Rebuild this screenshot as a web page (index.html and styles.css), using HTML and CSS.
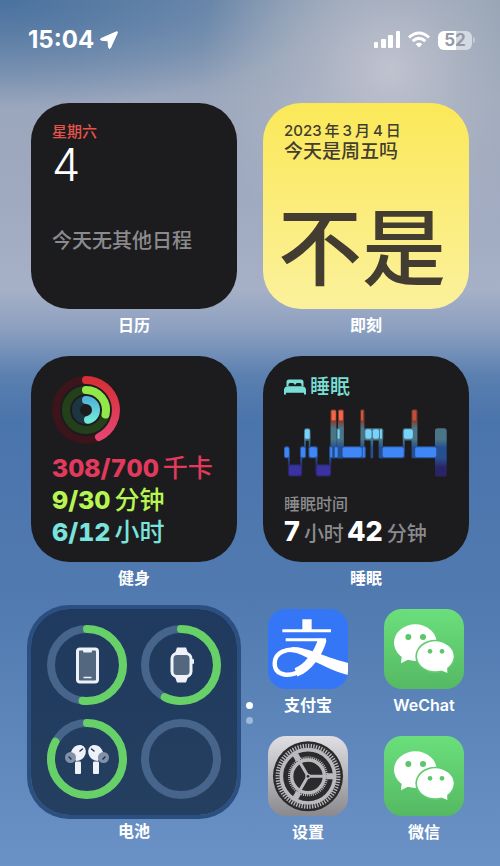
FILE: index.html
```
<!DOCTYPE html>
<html lang="zh-CN">
<head>
    <meta charset="UTF-8">
    <meta name="viewport" content="width=device-width, initial-scale=1.0">
    <title>主屏幕</title>
    <link rel="stylesheet" href="styles.css">
</head>
<body>
    <!-- 公用图形 -->
    <svg class="defs" width="0" height="0" aria-hidden="true">
        <defs>
            <linearGradient id="green" x1="0" y1="0" x2="0" y2="1">
                <stop offset="0" stop-color="#6bdf7c"/>
                <stop offset="1" stop-color="#55b963"/>
            </linearGradient>
            <symbol id="wechat" viewBox="0 0 240 240">
                <rect width="240" height="240" fill="url(#green)"/>
                <path d="M54 134L51 163L80 148Z" fill="#fff"/>
                <ellipse cx="94" cy="101" rx="64" ry="55" fill="#fff"/>
                <ellipse cx="154" cy="142" rx="60" ry="50" fill="#60cc70"/>
                <ellipse cx="154" cy="142" rx="55" ry="45" fill="#fff"/>
                <path d="M168 182L190 192L189 166Z" fill="#fff"/>
                <g fill="#5cc66c">
                    <circle cx="73" cy="84" r="9"/>
                    <circle cx="117" cy="84" r="9"/>
                    <circle cx="138" cy="127" r="7"/>
                    <circle cx="174" cy="127" r="7"/>
                </g>
            </symbol>
        </defs>
    </svg>

    <header class="status">
        <time>15:04</time>
        <svg class="arrow" viewBox="0 0 18 18" width="18" height="18"><path d="M16.500 .8L1 7.600Q-.3 9 1.500 9.300L8 9.800L8.600 16.300Q9 18.300 10.400 17L17.400 1.600Q17.600 .4 16.500 .8Z" fill="#fff" stroke="#fff"/></svg>
        <div class="signals">
            <svg viewBox="0 0 26 18" width="26" height="18" fill="#fff">
                <rect y="11" width="4" height="6" rx="1"/>
                <rect x="7" y="8" width="5" height="9" rx="1"/>
                <rect x="14" y="4" width="5" height="13" rx="1"/>
                <rect x="22" width="4" height="17" rx="1"/>
            </svg>
            <svg viewBox="0 0 22 18" width="22" height="18" fill="none" stroke="#fff" stroke-width="3">
                <path d="M1 6.500Q11-2.500 21 6.500"/>
                <path d="M4.600 10.200Q11 4.500 17.400 10.200"/>
                <path d="M11 16.500L7.700 13.200Q11 10.400 14.300 13.200Z" fill="#fff" stroke="none"/>
            </svg>
            <div class="battery"><span>52</span></div>
        </div>
    </header>

    <main class="home">
        <section class="cell">
            <div class="widget calendar">
                <p class="week">星期六</p>
                <p class="day">4</p>
                <p class="none">今天无其他日程</p>
            </div>
            <h2>日历</h2>
        </section>

        <section class="cell">
            <div class="widget jike">
                <p class="date">2023<i>年</i>3<i>月</i>4<i>日</i></p>
                <p class="ask">今天是周五吗</p>
                <p class="answer">不是</p>
            </div>
            <h2>即刻</h2>
        </section>

        <section class="cell">
            <div class="widget fitness">
                <svg class="rings" viewBox="0 0 70 70" width="70" height="70" fill="none" stroke-width="8" stroke-linecap="round">
                    <defs>
                        <linearGradient id="move" x1="0" y1="0" x2="0" y2="1">
                            <stop offset="0" stop-color="#d62f35"/>
                            <stop offset="1" stop-color="#e54570"/>
                        </linearGradient>
                        <linearGradient id="stand" x1="0" y1="0" x2="0" y2="1">
                            <stop offset="0" stop-color="#55b5d8"/>
                            <stop offset="1" stop-color="#72e6d8"/>
                        </linearGradient>
                    </defs>
                    <circle cx="35" cy="35" r="30" stroke="#3b151b"/>
                    <circle cx="35" cy="35" r="20" stroke="#24401a"/>
                    <circle cx="35" cy="35" r="10" stroke="#1d3441"/>
                    <path d="M35 5A30 30 0 0 1 48 62" stroke="url(#move)"/>
                    <path d="M35 15A20 20 0 0 1 54.500 39.500" stroke="#92e84b"/>
                    <path d="M35 25A10 10 0 0 1 37 44.800" stroke="url(#stand)"/>
                </svg>
                <p class="red"><b>308/700</b>千卡</p>
                <p class="lime"><b>9/30</b>分钟</p>
                <p class="cyan"><b>6/12</b>小时</p>
            </div>
            <h2>健身</h2>
        </section>

        <section class="cell">
            <div class="widget sleep">
                <p class="title">
                    <svg viewBox="0 0 22 16" width="22" height="16" fill="#79dfd5">
                        <path d="M2.500 7V3Q2.500 .5 5 .5H17Q19.500 .5 19.500 3V7H17.500V5.500Q17.500 4 16 4H13Q11.800 4 11.800 5.500H10.200Q10.200 4 9 4H6Q4.500 4 4.500 5.500V7Z"/>
                        <path d="M0 15.500V10.500Q.5 7.500 3.500 7.200H18.500Q21.500 7.500 22 10.500V15.500H20V13.800H2V15.500Z"/>
                    </svg>
                    睡眠
                </p>
                <svg class="chart" viewBox="84 174 504 210">
                    <defs>
                        <linearGradient id="stage" gradientUnits="userSpaceOnUse" x1="0" y1="176" x2="0" y2="381">
                            <stop offset="0" stop-color="#883b2c"/>
                            <stop offset=".17" stop-color="#883b2c"/>
                            <stop offset=".28" stop-color="#497586"/>
                            <stop offset=".45" stop-color="#497586"/>
                            <stop offset=".57" stop-color="#264f91"/>
                            <stop offset=".73" stop-color="#264f91"/>
                            <stop offset=".87" stop-color="#2a2365"/>
                            <stop offset="1" stop-color="#2a2365"/>
                        </linearGradient>
                    </defs>
                    <!-- 阶段之间的连线 -->
                    <g fill="url(#stage)">
                        <rect x="84" y="289" width="17" height="37" rx="6"/>
                        <rect x="96" y="300" width="6" height="74"/>
                        <rect x="96" y="345" width="44" height="37" rx="7"/>
                        <rect x="134" y="300" width="6" height="70"/>
                        <rect x="133" y="289" width="19" height="37" rx="6"/>
                        <rect x="146" y="234" width="19" height="38" rx="6"/>
                        <rect x="146" y="250" width="5" height="60"/>
                        <rect x="160" y="250" width="5" height="60"/>
                        <rect x="159" y="289" width="29" height="37" rx="6"/>
                        <rect x="181" y="300" width="6" height="70"/>
                        <rect x="181" y="345" width="48" height="37" rx="7"/>
                        <rect x="223" y="289" width="6" height="82"/>
                        <rect x="227" y="176" width="18" height="150" rx="5"/>
                        <rect x="250" y="176" width="18" height="150" rx="5"/>
                        <rect x="245" y="234" width="12" height="92" rx="4"/>
                        <rect x="223" y="289" width="113" height="37" rx="6"/>
                        <rect x="319" y="176" width="12" height="150" rx="4"/>
                        <rect x="330" y="234" width="59" height="37" rx="6"/>
                        <rect x="350" y="250" width="8" height="76" rx="2"/>
                        <rect x="375" y="250" width="13" height="76" rx="4"/>
                        <rect x="376" y="289" width="79" height="37" rx="6"/>
                        <rect x="449" y="245" width="6" height="60"/>
                        <rect x="449" y="234" width="40" height="37" rx="6"/>
                        <rect x="476" y="176" width="18" height="150" rx="5"/>
                        <rect x="479" y="289" width="80" height="37" rx="6"/>
                        <rect x="548" y="234" width="36" height="148" rx="8"/>
                    </g>
                    <g fill="#f0664a">
                        <rect x="230" y="179" width="13" height="31" rx="3"/>
                        <rect x="253" y="179" width="12" height="31" rx="3"/>
                        <rect x="321" y="179" width="6" height="31" rx="2" opacity=".7"/>
                        <rect x="479" y="179" width="11" height="31" rx="2" opacity=".5"/>
                    </g>
                    <g fill="#79d2fa">
                        <rect x="148" y="237" width="15" height="29" rx="5"/>
                        <rect x="249" y="237" width="6" height="29" rx="2"/>
                        <rect x="334" y="237" width="19" height="29" rx="6"/>
                        <rect x="357" y="237" width="19" height="29" rx="6"/>
                        <rect x="379" y="237" width="6" height="29" rx="2"/>
                        <rect x="452" y="237" width="28" height="29" rx="6"/>
                    </g>
                    <g fill="#3f86f6">
                        <rect x="86" y="292" width="13" height="31" rx="5"/>
                        <rect x="136" y="292" width="13" height="31" rx="5"/>
                        <rect x="162" y="292" width="23" height="31" rx="6"/>
                        <rect x="226" y="292" width="6" height="31" rx="2"/>
                        <rect x="240" y="292" width="9" height="31" rx="2"/>
                        <rect x="264" y="292" width="59" height="31" rx="6"/>
                        <rect x="326" y="292" width="6" height="31" rx="2"/>
                        <rect x="387" y="292" width="65" height="31" rx="6"/>
                        <rect x="487" y="292" width="65" height="31" rx="6"/>
                    </g>
                    <g fill="#3b32a2">
                        <rect x="99" y="348" width="38" height="31" rx="6"/>
                        <rect x="184" y="348" width="42" height="31" rx="6"/>
                    </g>
                </svg>
                <p class="caption">睡眠时间</p>
                <p class="total"><b>7</b>小时<b>42</b>分钟</p>
            </div>
            <h2>睡眠</h2>
        </section>

        <section class="cell">
            <div class="widget power">
                <svg viewBox="0 0 80 80">
                    <circle class="track" cx="40" cy="40" r="36"/>
                    <circle class="level" cx="40" cy="40" r="36" pathLength="100" stroke-dasharray="52 100"/>
                    <rect x="30.500" y="24" width="20" height="33" rx="2.500" fill="#53677f" stroke="#eef1f8" stroke-width="3"/>
                    <path d="M35.500 24H45.500L44.500 27.500H36.500Z" fill="#eef1f8"/>
                    <path d="M36.500 52.500H44.500" stroke="#eef1f8" stroke-width="1.500"/>
                </svg>
                <svg viewBox="0 0 80 80">
                    <circle class="track" cx="40" cy="40" r="36"/>
                    <circle class="level" cx="40" cy="40" r="36" pathLength="100" stroke-dasharray="57.500 100"/>
                    <path d="M34 28L36 22.500H45L47 28M34 52L36 57.500H45L47 52" fill="#eef1f8"/>
                    <rect x="31" y="28.500" width="19" height="23" rx="5" fill="#53677f" stroke="#eef1f8" stroke-width="3"/>
                    <rect x="51" y="34" width="2" height="5" rx="1" fill="#eef1f8"/>
                </svg>
                <svg viewBox="0 0 80 80">
                    <circle class="track" cx="40" cy="40" r="36"/>
                    <circle class="level" cx="40" cy="40" r="36" pathLength="100" stroke-dasharray="83 100"/>
                    <g id="bud">
                        <path d="M24 33Q27 25 34 26Q40 28 38.500 35Q36 42 29 42Z" fill="#eef1f8"/>
                        <rect x="28" y="42.500" width="6" height="12.500" rx="1" fill="#eef1f8"/>
                        <circle cx="23.500" cy="38.500" r="5.500" fill="#8291a7"/>
                        <path d="M33 32L35.500 30M22 38L24 40" stroke="#20344f" stroke-width="1.500" stroke-linecap="round"/>
                    </g>
                    <use href="#bud" transform="matrix(-1 0 0 1 80 0)"/>
                </svg>
                <svg viewBox="0 0 80 80">
                    <circle class="track" cx="40" cy="40" r="36"/>
                </svg>
            </div>
            <h2>电池</h2>
            <div class="dots"><i class="on"></i><i></i></div>
        </section>

        <nav class="apps">
            <a href="#">
                <svg viewBox="0 0 240 240">
                    <rect width="240" height="240" fill="#3576f6"/>
                    <g fill="none" stroke="#fff">
                        <path d="M117 31V64" stroke-width="28"/>
                        <path d="M43 65H189M53 92H174" stroke-width="9"/>
                        <path d="M163 92C153 130 120 178 84 190" stroke-width="26"/>
                        <path d="M104 182C70 205 20 204 20 163C20 130 56 117 92 123" stroke-width="13"/>
                    </g>
                    <path d="M72 115C115 113 154 139 240 162V198C190 184 150 162 112 143C94 134 82 130 64 129Z" fill="#fff"/>
                </svg>
                <span>支付宝</span>
            </a>
            <a href="#">
                <svg viewBox="0 0 240 240"><use href="#wechat"/></svg>
                <span>WeChat</span>
            </a>
            <a href="#">
                <svg viewBox="0 0 240 240">
                    <defs>
                        <linearGradient id="metal" x1="0" y1="0" x2="0" y2="1">
                            <stop offset="0" stop-color="#dfdfe4"/>
                            <stop offset="1" stop-color="#8a898e"/>
                        </linearGradient>
                    </defs>
                    <rect width="240" height="240" fill="url(#metal)"/>
                    <g fill="none" stroke="#b9b9be">
                        <circle cx="120" cy="121" r="105" fill="#2b2b2d" stroke="none"/>
                        <circle cx="120" cy="121" r="91" stroke-width="13" pathLength="144" stroke-dasharray="1 1"/>
                        <circle cx="120" cy="121" r="80" stroke-width="11"/>
                        <circle cx="120" cy="121" r="56" stroke-width="8" pathLength="120" stroke-dasharray="1 1"/>
                        <circle cx="120" cy="121" r="49" stroke-width="10"/>
                        <path d="M120 121H198M120 121L81 53.500M120 121L81 188.500" stroke-width="9"/>
                        <path d="M176 121H200M92 72.500L80 52M92 169.500L80 190" stroke-width="18"/>
                        <circle cx="120" cy="121" r="8" fill="#b9b9be" stroke="none"/>
                        <circle cx="120" cy="121" r="4" fill="#2b2b2d" stroke="none"/>
                    </g>
                </svg>
                <span>设置</span>
            </a>
            <a href="#">
                <svg viewBox="0 0 240 240"><use href="#wechat"/></svg>
                <span>微信</span>
            </a>
        </nav>
    </main>
</body>
</html>
```
FILE: styles.css
```
*{
    padding:0;
    margin:0;
    box-sizing: border-box;
}
body{
    min-height: 100vh;
    font-family: Inter, "Noto Sans CJK SC", sans-serif;
    font-weight: 500;
    color: #fff;
    background:
        radial-gradient(ellipse 190px 190px at 390px 70px, #c0c2cf 0%, #b9bdcaa0 40%, #aab2c200 100%),
        radial-gradient(ellipse 330px 110px at 0 0, #4a729f 0%, #4a729f00 100%),
        radial-gradient(ellipse 340px 200px at 100% 0, #8a9aab 0%, #8a9aab00 100%),
        linear-gradient(180deg, #7891b0 0, #9ba7bd 100px, #9fa9c0 200px, #a6b0c7 290px, #8b9fc0 330px, #5b80b0 375px, #4a74ac 420px, #517ab0 600px, #6a92c6 866px);
    background-color: #6a92c6;
}
i{
    font-style: normal;
}
svg{
    display: block;
}
.defs{
    position: absolute;
}

/* 状态栏 */
.status{
    display: flex;
    align-items: center;
    gap: 6px;
    padding: 24px 25px 47px 28px;
}
.status time{
    font-size: 24px;
    font-weight: 700;
    line-height: 32px;
}
.signals{
    display: flex;
    align-items: center;
    gap: 8px;
    margin-left: auto;
}
.battery{
    display: flex;
    align-items: center;
}
.battery span{
    width: 34px;
    border-radius: 6px;
    background: linear-gradient(90deg, #fff 52%, #d5d9e2 52%);
    color: #9299a8;
    font-size: 17px;
    font-weight: 700;
    line-height: 19px;
    text-align: center;
}
.battery::after{
    content: "";
    width: 2px;
    height: 6px;
    margin-left: 1px;
    border-radius: 0 2px 2px 0;
    background: #c3cad5;
}

/* 主屏幕 */
.home{
    display: grid;
    grid-template-columns: repeat(2, minmax(0, 1fr));
    gap: 15px 26px;
    padding: 0 31px;
}
.cell{
    position: relative;
}
.widget{
    aspect-ratio: 1;
    min-height: 0;
    padding: 18px 21px 0;
    border-radius: 38px;
    background: #1c1c1e;
}
.cell h2, .apps span{
    display: block;
    font-size: 16px;
    font-weight: 600;
    line-height: 32px;
    text-align: center;
}

/* 日历 */
.week{
    color: #e5534b;
    font-size: 15px;
    line-height: 22px;
}
.day{
    font-size: 45px;
    font-weight: 300;
    line-height: 44px;
}
.none{
    padding-top: 38px;
    color: #8b8b8e;
    font-size: 20px;
    line-height: 32px;
}

/* 即刻 */
.jike{
    background: linear-gradient(180deg, #fbe858, #fbf19c);
    color: #423d30;
}
.date{
    font-size: 15px;
    line-height: 20px;
}
.date i{
    margin: 0 3px;
}
.ask{
    font-size: 19px;
    line-height: 22px;
}
.answer{
    margin: 36px -6px 0;
    font-size: 84px;
    line-height: 100px;
    white-space: nowrap;
}

/* 健身 */
.fitness p{
    font-size: 25px;
    line-height: 32px;
    white-space: nowrap;
}
.fitness b{
    margin-right: 4px;
    font-weight: 800;
    font-variant-numeric: tabular-nums;
}
.rings{
    margin: 1px -1px 7px;
}
.red{
    color: #e23a5c;
}
.lime{
    color: #b8f553;
}
.cyan{
    color: #79e3dc;
}

/* 睡眠 */
.title{
    display: flex;
    align-items: center;
    gap: 4px;
    color: #79dfd5;
    font-size: 20px;
    line-height: 26px;
}
.chart{
    width: 100%;
    height: 70px;
    margin-top: 8px;
}
.caption{
    margin-top: 14px;
    color: #8b8b8e;
    font-size: 16px;
    line-height: 24px;
}
.total{
    color: #8b8b8e;
    font-size: 20px;
    line-height: 32px;
    white-space: nowrap;
}
.total b{
    margin-right: 4px;
    color: #fff;
    font-size: 27px;
    font-weight: 800;
}
.total b + b{
    margin-left: 3px;
}

/* 电池 */
.power{
    display: grid;
    grid-template-columns: 1fr 1fr;
    gap: 14px;
    padding: 16px;
    background: linear-gradient(180deg, #1f3a5e, #253f60);
    box-shadow: 0 0 0 4px #2b4f80;
}
.power .track{
    fill: none;
    stroke: #47648b;
    stroke-width: 8;
}
.power .level{
    fill: none;
    stroke: #67d168;
    stroke-width: 8;
    stroke-linecap: round;
    transform: rotate(-90deg);
    transform-origin: center;
}
.dots{
    position: absolute;
    top: 93px;
    right: -16px;
    display: grid;
    gap: 8px;
}
.dots i{
    width: 7px;
    height: 7px;
    border-radius: 50%;
    background: #a0b8da;
}
.dots .on{
    background: #fff;
}

/* 应用 */
.apps{
    display: grid;
    grid-template-columns: 1fr 1fr;
    align-content: start;
    gap: 15px 36px;
    padding: 0 5px;
}
.apps a{
    color: #fff;
    text-decoration: none;
}
.apps svg{
    width: 100%;
    border-radius: 18px;
}
```
